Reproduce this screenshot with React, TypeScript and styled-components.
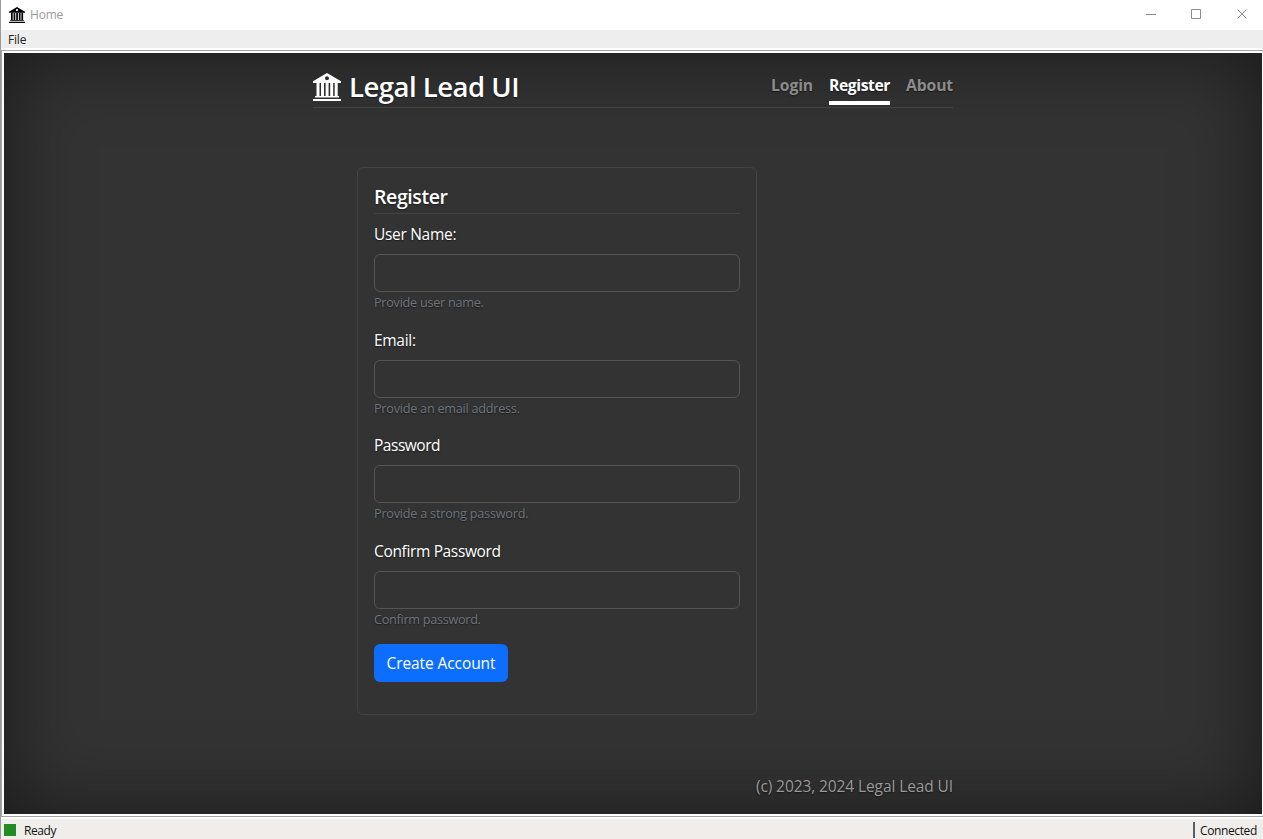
import React from "react";
import styled, { createGlobalStyle } from "styled-components";

const Global = createGlobalStyle`
  * { box-sizing: border-box; }
  html, body { margin: 0; padding: 0; overflow: hidden; }
  body { font-family: "Open Sans", "Noto Sans", sans-serif; }
`;

const Window = styled.div`
  width: 1263px;
  height: 839px;
  display: flex;
  flex-direction: column;
  background: #fff;
  border-left: 1px solid #9b9b9b;
`;

const TitleBar = styled.div`
  height: 30px;
  display: flex;
  align-items: center;
  padding-left: 8px;
  font-size: 12px;
  color: #000;
`;

const Label = styled.span<{ $ls?: number }>`
  letter-spacing: ${(p) => p.$ls ?? 0}px;
  white-space: nowrap;
`;

const TitleText = styled(Label)`
  flex: 1;
  margin-left: 5px;
  padding-bottom: 2px;
  color: #999;
`;

const Controls = styled.div`
  display: flex;
  svg { display: block; }
`;

const MenuBar = styled.div`
  height: 18px;
  background: #eee;
  display: flex;
  align-items: center;
  padding: 0 0 0 7px;
  font-size: 12px;
  color: #222;
`;

const Frame = styled.div`
  margin-top: 2px;
  height: 767px;
  flex: none;
  border: 1px solid #a5a5a5;
  border-right: 0;
  padding: 2px 1px 2px 2px;
`;

const Page = styled.div`
  height: 761px;
  background: #333;
  color: #fff;
  text-shadow: 0 0.8px 1.6px rgba(0, 0, 0, 0.5);
  box-shadow: inset 0 0 80px rgba(0, 0, 0, 0.5);
  display: flex;
  justify-content: center;
`;

const Cover = styled.div`
  width: 640px;
  display: flex;
  flex-direction: column;
`;

const Header = styled.header`
  height: 55px;
  flex: none;
  border-bottom: 1px solid #444;
  display: flex;
  align-items: flex-start;
  justify-content: space-between;
`;

const Brand = styled.h3`
  margin: 17px 0 0;
  font-size: 27.5px;
  font-weight: 600;
  line-height: 34px;
  display: flex;
  svg { margin: 3px 8px 0 0; }
`;

const Nav = styled.nav`
  display: flex;
  gap: 16px;
  margin-top: 20px;
`;

const NavLink = styled.a<{ $active?: boolean; $w: number }>`
  width: ${(p) => p.$w}px;
  height: 32px;
  font-size: 15.7px;
  line-height: 25px;
  font-weight: 700;
  white-space: nowrap;
  color: ${(p) => (p.$active ? "#fff" : "#8c8c8c")};
  border-bottom: 4px solid ${(p) => (p.$active ? "#fff" : "transparent")};
`;

const Card = styled.form`
  width: 400px;
  height: 548px;
  margin: 59px 0 0 44px;
  padding: 16px;
  border: 1px solid #434343;
  border-radius: 6px;
`;

const CardTitle = styled.h5`
  margin: 0 0 9px;
  height: 30px;
  font-size: 19.5px;
  font-weight: 600;
  line-height: 25px;
  border-bottom: 1px solid #434343;
`;

const Field = styled.div`
  height: 105.6px;
`;

const FieldLabel = styled.label`
  display: block;
  height: 31px;
  font-size: 15.5px;
  line-height: 23px;
`;

const Input = styled.input`
  display: block;
  width: 100%;
  height: 38px;
  background: transparent;
  border: 1px solid #555;
  border-radius: 6px;
  outline: none;
`;

const Help = styled.div`
  font-size: 12.7px;
  line-height: 20px;
  color: #6c757d;
`;

const Submit = styled.button`
  width: 134px;
  height: 38px;
  padding: 0;
  margin-top: -1px;
  border: 0;
  border-radius: 6px;
  background: #0d6efd;
  color: #fff;
  font: 15.5px/38px "Open Sans", "Noto Sans", sans-serif;
`;

const Footer = styled.footer`
  margin-top: 60px;
  font-size: 15.5px;
  line-height: 23px;
  text-align: right;
  color: #999;
`;

const StatusBar = styled.div`
  margin-top: 2px;
  height: 20px;
  background: #f0edeb;
  display: flex;
  align-items: flex-start;
  font-size: 12px;
  line-height: 16px;
  color: #111;
`;

const Light = styled.i`
  width: 12px;
  height: 12px;
  margin: 5px 8px 0 3px;
  background: #228b22;
`;

const StatusText = styled(Label)`
  margin-top: 4px;
`;

const Divider = styled.i`
  width: 2px;
  height: 16px;
  margin: 3px 5px 0 auto;
  background: #53606a;
`;

const Connected = styled(StatusText)`
  width: 63px;
`;

const Museum = ({ size }: { size: number }) => (
  <svg width={size} height={size} viewBox="0 0 28 28" fill="currentColor">
    <path
      fillRule="evenodd"
      d="M14 0 28 8.2V10H0V8.2ZM14 3.3a2 2 0 1 0 0 4 2 2 0 0 0 0-4Z"
    />
    <path d="M3.5 10h3v13h-3zM8 10h3v13H8zM12.6 10h3v13h-3zM17.2 10h3v13h-3zM21.7 10h3v13h-3z" />
    <path d="M2 23h24v1.6H2zM0 26h28v2H0z" />
  </svg>
);

const fields = [
  { label: "User Name:", ls: -0.3, help: "Provide user name.", hls: -0.28 },
  { label: "Email:", ls: -0.3, help: "Provide an email address.", hls: -0.26 },
  { label: "Password", ls: -0.47, help: "Provide a strong password.", hls: -0.24 },
  { label: "Confirm Password", ls: -0.35, help: "Confirm password.", hls: -0.3 },
];

export default function App() {
  return (
    <>
      <Global />
      <Window>
        <TitleBar>
          <Museum size={16} />
          <TitleText $ls={-0.2}>Home</TitleText>
          <Controls>
            <svg width="117" height="30" fill="none" stroke="#8c8c8c">
              <path d="M0 14.5h10M45.500 9.500h9v9h-9zM91.500 9.500l9 9M100.500 9.500l-9 9" />
            </svg>
          </Controls>
        </TitleBar>
        <MenuBar>
          <Label $ls={-0.2}>File</Label>
        </MenuBar>
        <Frame>
          <Page>
            <Cover>
              <Header>
                <Brand>
                  <Museum size={28} />
                  <Label $ls={-0.5}>Legal Lead UI</Label>
                </Brand>
                <Nav>
                  <NavLink $w={42}><Label $ls={-0.1}>Login</Label></NavLink>
                  <NavLink $w={61} $active><Label $ls={-0.4}>Register</Label></NavLink>
                  <NavLink $w={47}><Label $ls={-0.1}>About</Label></NavLink>
                </Nav>
              </Header>
              <Card>
                <CardTitle><Label $ls={-0.4}>Register</Label></CardTitle>
                {fields.map((f) => (
                  <Field key={f.label}>
                    <FieldLabel><Label $ls={f.ls}>{f.label}</Label></FieldLabel>
                    <Input />
                    <Help><Label $ls={f.hls}>{f.help}</Label></Help>
                  </Field>
                ))}
                <Submit type="button"><Label $ls={-0.1}>Create Account</Label></Submit>
              </Card>
              <Footer><Label $ls={-0.1}>(c) 2023, 2024 Legal Lead UI</Label></Footer>
            </Cover>
          </Page>
        </Frame>
        <StatusBar>
          <Light />
          <StatusText $ls={-0.4}>Ready</StatusText>
          <Divider />
          <Connected $ls={-0.38}>Connected</Connected>
        </StatusBar>
      </Window>
    </>
  );
}
